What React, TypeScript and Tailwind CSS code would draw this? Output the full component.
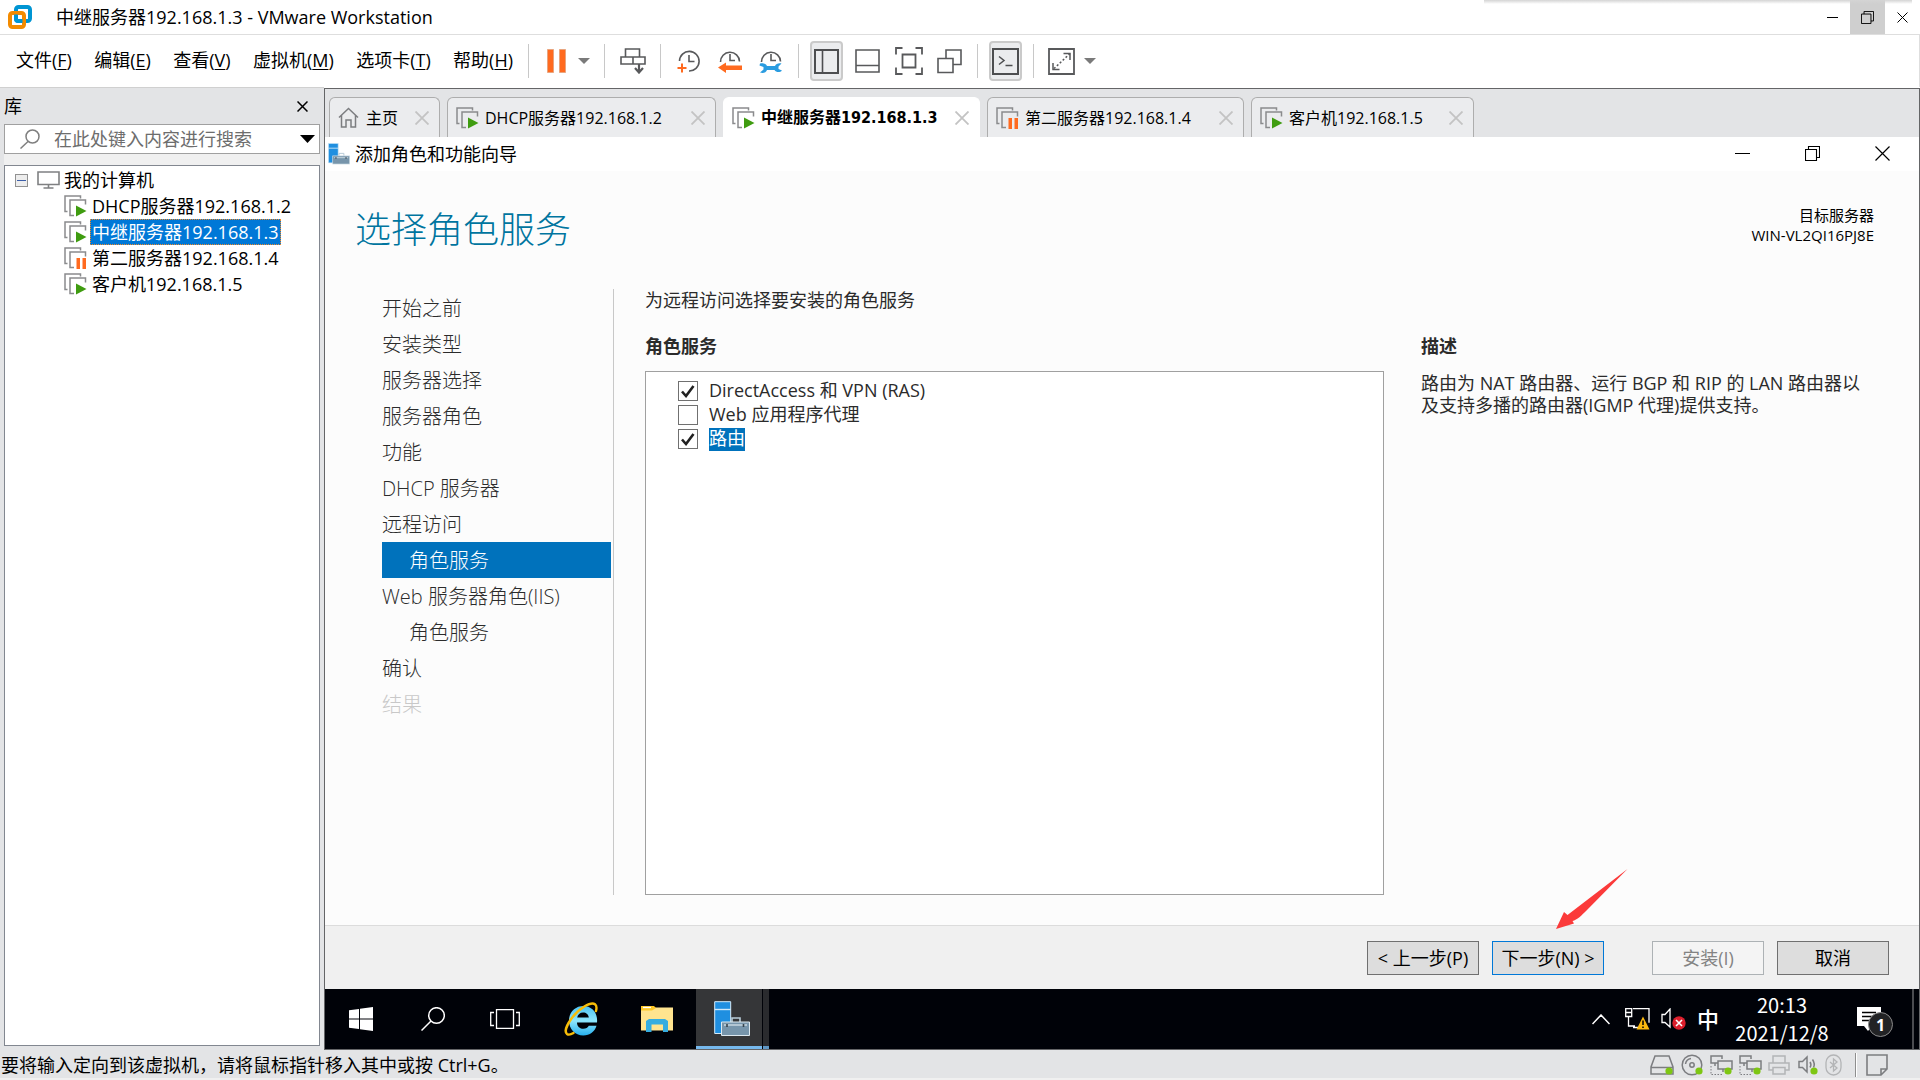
import { useState } from "react";
import type { ReactNode } from "react";

type VmState = "running" | "paused";

const menus = [
  { label: "文件", key: "F" },
  { label: "编辑", key: "E" },
  { label: "查看", key: "V" },
  { label: "虚拟机", key: "M" },
  { label: "选项卡", key: "T" },
  { label: "帮助", key: "H" },
];

const machines: { name: string; state: VmState; tabWidth: string }[] = [
  { name: "DHCP服务器192.168.1.2", state: "running", tabWidth: "w-[269px]" },
  { name: "中继服务器192.168.1.3", state: "running", tabWidth: "w-[257px]" },
  { name: "第二服务器192.168.1.4", state: "paused", tabWidth: "w-[257px]" },
  { name: "客户机192.168.1.5", state: "running", tabWidth: "w-[223px]" },
];

const steps = [
  { label: "开始之前" },
  { label: "安装类型" },
  { label: "服务器选择" },
  { label: "服务器角色" },
  { label: "功能" },
  { label: "DHCP 服务器" },
  { label: "远程访问" },
  { label: "角色服务", sub: true, active: true },
  { label: "Web 服务器角色(IIS)" },
  { label: "角色服务", sub: true },
  { label: "确认" },
  { label: "结果", disabled: true },
];

const roleServices = [
  { id: "ras", label: "DirectAccess 和 VPN (RAS)", checked: true },
  { id: "proxy", label: "Web 应用程序代理", checked: false },
  { id: "routing", label: "路由", checked: true },
];

/* ---------- icons ---------- */

function VmwareLogo() {
  return (
    <svg width="24" height="24" viewBox="0 0 24 24" fill="none" strokeWidth="4">
      <rect x="8" y="2" width="14" height="14" rx="2.5" stroke="#0095d3" />
      <rect x="2" y="8" width="14" height="14" rx="2.5" stroke="#f38b00" />
      <path d="M8 9.500V14a2 2 0 0 0 2 2h4.500" stroke="#0095d3" />
    </svg>
  );
}

function VmIcon({ state }: { state: VmState }) {
  return (
    <svg width="23" height="22" viewBox="0 0 23 22" fill="none" className="shrink-0">
      <path d="M3.500 16.500H1V1h15.500V3.500" stroke="#8a8b8d" strokeWidth="1.500" />
      <path d="M10 20.500H6V5h15.500V9.500" stroke="#8a8b8d" strokeWidth="1.500" />
      {state === "running" ? (
        <path d="M12 10.500 22.500 16 12 21.500z" fill="#3f9c10" />
      ) : (
        <path d="M12.500 11h3.500v11h-3.500zM18.500 11H22v11h-3.500z" fill="#ff6a1f" />
      )}
    </svg>
  );
}

function Cross({ size, color, width = 1 }: { size: number; color: string; width?: number }) {
  return (
    <svg width={size} height={size} viewBox={`0 0 ${size} ${size}`} stroke={color} strokeWidth={width}>
      <path d={`M.5.5 ${size - 0.5} ${size - 0.5}M${size - 0.5}.5.5 ${size - 0.5}`} />
    </svg>
  );
}

function RestoreIcon({ size }: { size: number }) {
  return (
    <svg width={size} height={size} viewBox="0 0 15 15" fill="none" stroke="#000" strokeWidth="1.100">
      <path d="M.5 3.500h11v11H.5zM3.500 3.500V.5h11v11h-3" />
    </svg>
  );
}

function Caret() {
  return (
    <svg width="12" height="6" viewBox="0 0 12 6"><path d="M0 0h12L6 6z" fill="#7a7a7a" /></svg>
  );
}

function Clock({ kind }: { kind: "take" | "revert" | "manage" }) {
  return (
    <svg width="24" height="24" viewBox="0 0 24 24" fill="none">
      {kind === "take" ? (
        <>
          <path d="M2.500 12A9.800 9.800 0 1 1 12 22" stroke="#58595b" strokeWidth="1.600" />
          <path d="M12 6v6.500h5.500" stroke="#58595b" strokeWidth="1.600" />
          <path d="M5 14.500v9M.5 19h9" stroke="#ff6a1f" strokeWidth="2" />
        </>
      ) : (
        <>
          <path d="M2.500 13A9.500 9.500 0 0 1 21.500 12.500" stroke="#58595b" strokeWidth="1.600" />
          <path d="M12 5v6.500h5" stroke="#58595b" strokeWidth="1.600" />
        </>
      )}
      {kind === "revert" && <path d="M0 18.500 8 13.500v3h16v4.500H8v3z" fill="#ff6a1f" />}
      {kind === "manage" && (
        <path
          d="M1 14.500c3.500-.8 6 .3 7 2.500h8c1-2.200 3.500-3.300 6.500-2.500l-3 3v2.500l3.500 1.500c-2 2.300-6 2-7.500-.5H8c-1 2.500-3.500 3.500-7 2.500l3.500-3v-2.500L.5 16.500z"
          fill="#2a9ce0"
        />
      )}
    </svg>
  );
}

function ServerManagerIcon({ size }: { size: number }) {
  return (
    <svg width={size} height={size} viewBox="0 0 36 36" fill="none">
      <path d="M.7.700h16V32.500H.7z" fill="#1f8fe0" stroke="#d3eaf9" strokeWidth="1" />
      <path d="M.7 8.500h16" stroke="#d3eaf9" strokeWidth="1.400" />
      <path d="M18 21v-4h8v4" stroke="#b8ccd8" strokeWidth="1.600" />
      <path d="M7.500 21H35.500V34.500H7.500z" fill="#7795ab" stroke="#dce8ef" strokeWidth="1" />
      <path d="M10 24h23" stroke="#dce8ef" strokeWidth="1.200" />
      <path d="M13 23v3M29.500 23v3" stroke="#38444d" strokeWidth="1.600" />
    </svg>
  );
}

function IeIcon() {
  return (
    <svg width="34" height="34" viewBox="0 0 34 34" fill="none">
      <defs>
        <linearGradient id="ie" x1="0" y1="0" x2="0" y2="1">
          <stop offset="0" stopColor="#4cc4f4" />
          <stop offset=".5" stopColor="#8ee6fd" />
          <stop offset="1" stopColor="#27b0ee" />
        </linearGradient>
      </defs>
      <path
        fillRule="evenodd"
        fill="url(#ie)"
        d="M33 20.500H13c0 4 3 6.300 6.300 6.300 2.700 0 4.500-1.200 5.500-3h7.700C31 29.500 25.800 33.500 19.300 33.500 11 33.500 5 27 5 18.500S11.500 4 19.300 4C28 4 34 11 33 20.500zM13.200 15.500h11.600c-.3-3-2.600-5-5.700-5s-5.400 2-5.900 5z"
      />
      <path
        d="M32 9c.8-3 .6-5.500-1-6.800C26.500-.5 15 6.500 7.500 16.500 2 24 .5 30 3 32c1.600 1.200 4 .5 6.500-1"
        stroke="#f7bd08"
        strokeWidth="2.400"
        strokeLinecap="round"
      />
    </svg>
  );
}

function FolderIcon() {
  return (
    <svg width="32" height="28" viewBox="0 0 32 28">
      <path d="M0 1h12l3 3h-3v3H0z" fill="#ffc928" />
      <path d="M0 4.500h11l3.500-2H32v23H0z" fill="#ffe48f" />
      <path d="M0 1h13l2 2-4 2.500H0z" fill="#ffc928" />
      <path d="M2 2.500h8" stroke="#fff" strokeWidth="1.300" />
      <path d="M5 27V16l3-2h16l3 2v11h-5v-7.500H10.500V27z" fill="#35ade0" />
    </svg>
  );
}

function StatusDot() {
  return <circle cx="18" cy="17" r="3.600" fill="#7ec613" />;
}

function NetworkStatus() {
  return (
    <svg width="23" height="22" viewBox="0 0 23 22" fill="none" stroke="#7c7d80" strokeWidth="1.500">
      <path d="M8 9H1V2h11v3M5 12v-3M8 7h14v8H8zM13 15v3" />
      <path d="M1 12v8.500h12" strokeDasharray="1.500 1.500" strokeWidth="1" />
      <g stroke="none"><StatusDot /></g>
    </svg>
  );
}

/* ---------- shell ---------- */

function ToolGroup({ children, className }: { children: ReactNode; className: string }) {
  return <div className={`flex h-full items-center border-l border-[#c8c8c8] ${className}`}>{children}</div>;
}

function ToolButton({ label, pressed, children }: { label: string; pressed?: boolean; children: ReactNode }) {
  return (
    <button
      aria-label={label}
      className={`flex h-10 w-[33px] items-center justify-center ${
        pressed ? "rounded border-2 border-[#cacaca] bg-[#ebecee]" : ""
      }`}
    >
      {children}
    </button>
  );
}

function TitleBar() {
  return (
    <header className="relative flex h-[35px] items-stretch border-b border-[#dedede] bg-white pl-2">
      <div className="flex flex-1 items-center gap-6">
        <VmwareLogo />
        <h1 className="text-lg leading-6">中继服务器192.168.1.3 - VMware Workstation</h1>
      </div>
      <button aria-label="最小化" className="flex w-[35px] items-center justify-center">
        <span className="h-px w-[11px] bg-black" />
      </button>
      <button aria-label="还原" className="flex w-[35px] items-center justify-center bg-[#cfcfcf]">
        <RestoreIcon size={13} />
      </button>
      <button aria-label="关闭" className="flex w-[35px] items-center justify-center">
        <Cross size={11} color="#000" />
      </button>
      <div className="absolute right-2 top-0 h-1 w-[428px] bg-linear-to-b from-[#d4d4d4] to-transparent" />
    </header>
  );
}

function MenuBar() {
  return (
    <div className="flex h-[52px] items-center border-r border-[#dedede] bg-white">
      <nav className="flex w-[528px] shrink-0 justify-between pb-0.5 pl-4 pr-[15px] text-lg leading-6">
        {menus.map(m => (
          <button key={m.key} className="whitespace-nowrap">
            {m.label}(<u className="underline-offset-2">{m.key}</u>)
          </button>
        ))}
      </nav>
      <div className="flex h-[34px] shrink-0">
        <ToolGroup className="w-[76px] gap-3 pl-[18px]">
          <button aria-label="挂起">
            <svg width="19" height="24" viewBox="0 0 19 24">
              <path d="M.5.5h6v23h-6zM12.500.5h6v23h-6z" fill="#ff6a1f" stroke="#e8a57f" />
            </svg>
          </button>
          <button aria-label="电源选项"><Caret /></button>
        </ToolGroup>
        <ToolGroup className="w-14 justify-center">
          <button aria-label="发送 Ctrl+Alt+Del">
            <svg width="26" height="26" viewBox="0 0 26 26" fill="none" stroke="#58595b" strokeWidth="1.600">
              <path d="M5.500 1h14v8h-14zM1 9h12v7H1zM13 9h12v7H13z" />
              <path d="M19 16v8M15 20l4 4.500 4-4.500" strokeWidth="2.200" />
            </svg>
          </button>
        </ToolGroup>
        <ToolGroup className="w-[138px] gap-[17px] pl-4">
          <button aria-label="拍摄快照"><Clock kind="take" /></button>
          <button aria-label="恢复快照"><Clock kind="revert" /></button>
          <button aria-label="管理快照"><Clock kind="manage" /></button>
        </ToolGroup>
        <ToolGroup className="w-[179px] gap-2 pl-[11px]">
          <ToolButton label="显示库" pressed>
            <svg width="25" height="25" viewBox="0 0 25 25" fill="none" stroke="#4d4e50" strokeWidth="2">
              <path d="M1 1h23v23H1z" /><path d="M8.500 1v23" strokeWidth="1.600" />
            </svg>
          </ToolButton>
          <ToolButton label="缩略图栏">
            <svg width="25" height="24" viewBox="0 0 25 24" fill="none" stroke="#58595b" strokeWidth="1.600">
              <path d="M1 1h23v22H1zM1 16.500h23" />
            </svg>
          </ToolButton>
          <ToolButton label="全屏">
            <svg width="28" height="28" viewBox="0 0 28 28" fill="none" stroke="#58595b" strokeWidth="1.800">
              <path d="M7.500 7.500h13v13h-13zM1 7.500V1h6.500M20.500 1H27v6.500M27 20.500V27h-6.500M7.500 27H1v-6.500" />
            </svg>
          </ToolButton>
          <ToolButton label="Unity">
            <svg width="25" height="25" viewBox="0 0 25 25" fill="none" stroke="#58595b" strokeWidth="1.600">
              <path d="M1 9.500h15v14H1zM9 9.500V1h15v14.500h-8" />
            </svg>
          </ToolButton>
        </ToolGroup>
        <ToolGroup className="w-14 justify-center">
          <ToolButton label="控制台视图" pressed>
            <svg width="27" height="27" viewBox="0 0 27 27" fill="none" stroke="#4d4e50" strokeWidth="2" className="shrink-0">
              <path d="M1 1h25v25H1z" />
              <path d="m7 8.500 5 4-5 4M13.500 17.500h7" strokeWidth="1.500" />
            </svg>
          </ToolButton>
        </ToolGroup>
        <ToolGroup className="gap-[9px] pl-3.5">
          <button aria-label="自由拉伸">
            <svg width="27" height="27" viewBox="0 0 27 27" fill="none" stroke="#58595b" strokeWidth="1.800">
              <path d="M1 1h25v25H1z" />
              <path d="M15.500 5.500H22V12M5 15v6.500h6.500" strokeWidth="1.500" />
              <path d="M22 5.500 5 21.500" strokeWidth="1.500" strokeDasharray="2 2" />
            </svg>
          </button>
          <button aria-label="拉伸选项"><Caret /></button>
        </ToolGroup>
      </div>
    </div>
  );
}

function Library() {
  return (
    <aside className="flex w-[324px] shrink-0 flex-col border-t border-[#d0d0d0] bg-[#e3e4e6] pb-1 pl-1 pr-1 text-lg leading-6">
      <div className="flex h-9 items-center justify-between pr-3">
        <h2>库</h2>
        <button aria-label="关闭库"><Cross size={11} color="#000" width={1.5} /></button>
      </div>
      <div className="flex h-[30px] items-center border border-[#a0a0a0] bg-white pl-[15px] pr-1">
        <svg width="20" height="20" viewBox="0 0 20 20" fill="none" stroke="#7f7f7f" strokeWidth="1.500">
          <circle cx="12.500" cy="7.500" r="6.500" /><path d="M8 12.500.5 19.500" />
        </svg>
        <input
          type="text"
          aria-label="搜索"
          placeholder="在此处键入内容进行搜索"
          className="ml-3.5 h-6 min-w-0 flex-1 bg-transparent outline-none placeholder:text-[#6d6d6d]"
        />
        <button aria-label="搜索范围">
          <svg width="15" height="8" viewBox="0 0 15 8"><path d="M0 0h15L7.500 8z" /></svg>
        </button>
      </div>
      <div className="h-[11px] bg-[#f0f0f0]" />
      <div className="flex-1 border border-[#828790] bg-white pl-2.5 pt-px">
        <div className="flex h-[26px] items-center">
          <button aria-label="折叠" className="flex size-[13px] items-center justify-center border border-[#919191] bg-[#ededed]">
            <span className="h-px w-[9px] bg-[#3c5ea8]" />
          </button>
          <svg width="23" height="18" viewBox="0 0 23 18" fill="none" stroke="#7f8082" strokeWidth="1.600" className="ml-[9px]">
            <path d="M1 1h21v12.500H1zM11.500 13.500V17M6.500 17h10" />
          </svg>
          <span className="ml-1">我的计算机</span>
        </div>
        <ul className="pl-[49px]">
          {machines.map((m, i) => (
            <li key={m.name} className="flex h-[26px] items-center gap-[3px]">
              <VmIcon state={m.state} />
              <button
                className={`flex h-[26px] items-center whitespace-nowrap border px-px ${
                  i === 1 ? "border-dotted border-[#f08a28] bg-[#0078d7] text-white" : "border-transparent"
                }`}
              >
                {m.name}
              </button>
            </li>
          ))}
        </ul>
      </div>
    </aside>
  );
}

function TabStrip() {
  const base = "flex h-10 items-center justify-between rounded-t-md border border-b-0 pl-2 pr-2.5";
  return (
    <div className="flex h-12 items-end gap-[7px] bg-[#e3e4e6] pl-1 text-base leading-5">
      <div className={`${base} w-[111px] border-[#adadad] bg-[#ebecee]`}>
        <button className="flex items-center gap-[7px]">
          <svg width="21" height="21" viewBox="0 0 21 21" fill="none" stroke="#7c7d80" strokeWidth="1.500">
            <path d="M1 10.500 10.500 1.500l9.500 9M3.500 8.500V20h4.500v-7h5v7h4.500V8.500" />
          </svg>
          主页
        </button>
        <button aria-label="关闭主页"><Cross size={14} color="#c3c3c3" width={1.8} /></button>
      </div>
      {machines.map((m, i) => (
        <div
          key={m.name}
          className={`${base} ${m.tabWidth} ${i === 1 ? "border-white bg-white" : "border-[#adadad] bg-[#ebecee]"}`}
        >
          <button
            className={`flex items-center gap-1.5 whitespace-nowrap ${
              i === 1 ? "font-['DejaVu_Sans_Condensed','Noto_Sans_CJK_SC',sans-serif] font-bold" : ""
            }`}
          >
            <VmIcon state={m.state} />
            {m.name}
          </button>
          <button aria-label={`关闭 ${m.name}`}><Cross size={14} color="#c3c3c3" width={1.8} /></button>
        </div>
      ))}
    </div>
  );
}

/* ---------- guest desktop ---------- */

function RoleList() {
  const [selected, setSelected] = useState("routing");
  return (
    <div className="flex-1 border border-[#a0a0a0] bg-white pl-8 pt-[7px]">
      {roleServices.map(r => (
        <div key={r.id} className="flex h-6 items-center">
          <div className="relative h-5">
            <input
              id={r.id}
              type="checkbox"
              defaultChecked={r.checked}
              className="peer block size-5 appearance-none border border-[#707070] bg-white"
            />
            <svg
              width="14" height="13" viewBox="0 0 14 13" fill="none" stroke="#212121" strokeWidth="2.600"
              className="pointer-events-none absolute left-[3px] top-1 hidden peer-checked:block"
            >
              <path d="M1 6.500 5 11 12.500 1" />
            </svg>
          </div>
          <label
            htmlFor={r.id}
            onClick={() => setSelected(r.id)}
            className={`ml-[11px] h-[23px] leading-[21px] ${selected === r.id ? "bg-[#0072bc] text-white" : ""}`}
          >
            {r.label}
          </label>
        </div>
      ))}
    </div>
  );
}

const buttonTone = {
  normal: "border-[#707070] bg-[#dddddd] text-black",
  primary: "border-[#0078d7] bg-[#dddddd] text-black",
  disabled: "border-[#adb2b5] bg-[#f4f4f4] text-[#838383]",
};

function WizardButton({ children, tone = "normal" }: { children: ReactNode; tone?: keyof typeof buttonTone }) {
  return (
    <button
      disabled={tone === "disabled"}
      className={`h-[34px] w-28 whitespace-nowrap border text-lg leading-6 ${buttonTone[tone]}`}
    >
      {children}
    </button>
  );
}

function Wizard() {
  return (
    <section className="flex flex-1 flex-col bg-[#fcfcfc] text-lg leading-6 text-[#2b2b2b]">
      <div className="flex h-[34px] items-center bg-white pl-[3px] text-black">
        <ServerManagerIcon size={22} />
        <h2 className="ml-[5px] flex-1">添加角色和功能向导</h2>
        <div className="flex items-center gap-[55px] pb-0.5 pr-[29px]">
          <button aria-label="最小化" className="flex h-[15px] items-center"><span className="h-px w-[15px] bg-black" /></button>
          <button aria-label="还原"><RestoreIcon size={15} /></button>
          <button aria-label="关闭"><Cross size={15} color="#000" width={1.2} /></button>
        </div>
      </div>

      <div className="flex h-[118px] items-start justify-between pl-[30px] pr-[45px] pt-[34px]">
        <h1 className="text-4xl font-light leading-[50px] text-[#00759f]">选择角色服务</h1>
        <p className="text-right text-[15px] leading-5 text-black">
          目标服务器
          <br />
          WIN-VL2QI16PJ8E
        </p>
      </div>

      <div className="flex flex-1 pb-[30px] pl-[57px] pr-[45px]">
        <nav className="w-[232px] shrink-0 border-r border-[#c8c8c8] pr-[2px] pt-px text-xl font-light">
          {steps.map((s, i) => (
            <button
              key={i}
              disabled={s.disabled}
              className={`flex h-9 w-full items-center whitespace-nowrap pt-px disabled:text-[#c8c8c8] ${s.sub ? "pl-[27px]" : ""} ${
                s.active ? "bg-[#0072bc] text-white" : ""
              }`}
            >
              {s.label}
            </button>
          ))}
        </nav>
        <div className="ml-[31px] flex flex-1 flex-col">
          <p className="leading-[22px]">为远程访问选择要安装的角色服务</p>
          <h3 className="mb-[14px] mt-6 leading-[22px] font-bold">角色服务</h3>
          <RoleList />
        </div>
        <div className="ml-[37px] w-[453px] shrink-0 pt-[46px]">
          <h3 className="leading-[22px] font-bold">描述</h3>
          <p className="mt-[15px] leading-[22px]">
            路由为 NAT 路由器、运行 BGP 和 RIP 的 LAN 路由器以及支持多播的路由器(IGMP 代理)提供支持。
          </p>
        </div>
      </div>

      <footer className="flex h-16 items-center justify-end gap-[13px] border-t border-[#dcdcdc] bg-[#f0f0f0] pr-[30px]">
        <WizardButton>&lt; 上一步(P)</WizardButton>
        <div className="relative mr-[35px]">
          <WizardButton tone="primary">下一步(N) &gt;</WizardButton>
          <svg width="72" height="60" viewBox="0 0 72 60" className="absolute bottom-full left-16 mb-3">
            <path d="M71.500 0 11.500 46 8 43 0 60l18-5.500-1.500-2.500C21 51 26 46 30 42z" fill="#fb3a3a" />
          </svg>
        </div>
        <WizardButton tone="disabled">安装(I)</WizardButton>
        <WizardButton>取消</WizardButton>
      </footer>
    </section>
  );
}

function Taskbar() {
  return (
    <div className="flex h-[60px] items-center bg-[#000208] text-white">
      <button aria-label="开始" className="flex w-[72px] justify-center">
        <svg width="24" height="24" viewBox="0 0 24 24" fill="#fff">
          <path d="M0 3.300 10 2v9.500H0zM11 1.800 24 0v11.500H11zM0 12.500h10V22L0 20.700zM11 12.500h13V24l-13-1.800z" />
        </svg>
      </button>
      <button aria-label="搜索" className="flex w-[72px] justify-center">
        <svg width="24" height="24" viewBox="0 0 24 24" fill="none" stroke="#fff" strokeWidth="1.500">
          <circle cx="15.500" cy="8.500" r="7.800" /><path d="M10 14 .5 23.500" />
        </svg>
      </button>
      <button aria-label="任务视图" className="flex w-[72px] justify-center">
        <svg width="30" height="20" viewBox="0 0 30 20" fill="none" stroke="#fff" strokeWidth="1.300">
          <path d="M6.500.7h17v18.600h-17zM4 3.500H.7v13H4M26 3.500h3.300v13H26" />
        </svg>
      </button>
      <button aria-label="Internet Explorer" className="ml-1 flex w-[72px] justify-center"><IeIcon /></button>
      <button aria-label="文件资源管理器" className="ml-1 flex w-[72px] justify-center"><FolderIcon /></button>
      <button
        aria-label="服务器管理器"
        className="ml-[3px] flex h-full w-[66px] items-center justify-end border-b-3 border-[#76b9ed] bg-[#353638] pr-3 pt-0.5"
      >
        <ServerManagerIcon size={36} />
      </button>
      <span className="ml-px h-full w-[6px] border-b-3 border-[#5f97c4] bg-[#2a2b2e]" />

      <div className="ml-auto flex h-full items-center">
        <button aria-label="显示隐藏的图标">
          <svg width="18" height="11" viewBox="0 0 18 11" fill="none" stroke="#fff" strokeWidth="1.500"><path d="M.5 10 9 1l8.500 9" /></svg>
        </button>
        <svg width="25" height="22" viewBox="0 0 25 22" fill="none" stroke="#fff" strokeWidth="1.300" className="ml-[15px]">
          <path d="M8 .7h16v14M3.500 9v9H10M8 19.500h5M.7.700h6V8.500h-6zM.7 4.500h6" />
          <path d="M18 8.500 24.500 21.500h-13z" fill="#fbb80f" stroke="none" />
          <path d="M18 12.500v4.500M18 18.500V20" stroke="#000" strokeWidth="1.500" />
        </svg>
        <svg width="25" height="22" viewBox="0 0 25 22" fill="none" className="ml-[11px]">
          <path d="M1 6.500h3L9 1v18L4 14.500H1z" stroke="#fff" strokeWidth="1.300" />
          <circle cx="18" cy="15" r="6.700" fill="#dc1e2c" />
          <path d="m15 12 6 6M21 12l-6 6" stroke="#fff" strokeWidth="1.600" />
        </svg>
        <span className="ml-[11px] w-[22px] text-[22px] font-medium leading-7">中</span>
        <div className="ml-3 w-[102px] text-center font-['Noto_Sans_CJK_SC',sans-serif] text-xl leading-7">
          <div>20:13</div>
          <div>2021/12/8</div>
        </div>
        <button aria-label="通知" className="relative ml-6 mr-[19px] h-9 w-9 text-left">
          <svg width="25" height="25" viewBox="0 0 25 25">
            <path d="M0 0h24v19h-9l-4 5-4-5H0z" fill="#fff" />
            <path d="M5 5.500h14M5 9.500h14M5 13.500h9" stroke="#000" strokeWidth="1.400" />
          </svg>
          <span className="absolute bottom-0 right-0 flex size-[25px] items-center justify-center rounded-full border border-[#8a8a8a] bg-[#222325] text-base font-bold leading-5">
            1
          </span>
        </button>
        <span className="h-full w-[7px] border-l-2 border-[#4b4c50]" />
      </div>
    </div>
  );
}

function StatusBar() {
  return (
    <footer className="flex h-[30px] items-center border-b-2 border-[#f0f0f0] bg-[#e3e4e6] pl-px pr-8 pt-0.5">
      <p className="flex-1 text-lg leading-6">要将输入定向到该虚拟机，请将鼠标指针移入其中或按 Ctrl+G。</p>
      <div className="flex items-center gap-1.5">
        <svg width="25" height="22" viewBox="0 0 25 22" fill="none" stroke="#7c7d80" strokeWidth="1.500">
          <path d="M5 2h14l4 11v7H1v-7zM1 13.500h22" />
          <circle cx="19" cy="17" r="3.600" fill="#7ec613" stroke="none" />
        </svg>
        <svg width="23" height="22" viewBox="0 0 23 22" fill="none" stroke="#7c7d80" strokeWidth="1.500">
          <circle cx="11" cy="11" r="9.800" /><circle cx="11" cy="11" r="2.200" /><path d="M4.500 10A6.500 6.500 0 0 1 10 4.500" />
          <g stroke="none"><StatusDot /></g>
        </svg>
        <NetworkStatus />
        <NetworkStatus />
        <svg width="22" height="22" viewBox="0 0 22 22" fill="none" stroke="#b3b4b6" strokeWidth="1.500">
          <path d="M5 9V2h12v7M5 16H1V9h20v7h-4M5 13.500h12V20H5z" />
        </svg>
        <svg width="23" height="22" viewBox="0 0 23 22" fill="none" stroke="#7c7d80" strokeWidth="1.500">
          <path d="M3 7.500h3.500L11 3v15l-4.500-4.500H3zM14 8c1 1.500 1 4 0 5.500M16.500 5.500c2 3 2 6 1 8" />
          <g stroke="none"><StatusDot /></g>
        </svg>
        <svg width="18" height="22" viewBox="0 0 18 22" fill="none" stroke="#b3b4b6" strokeWidth="1.300">
          <rect x="1" y="1" width="15" height="20" rx="7.500" />
          <path d="m5 8 7 6-3.500 3V5l3.500 3-7 6" />
        </svg>
        <span className="ml-1.5 h-6 w-0.5 border-l border-[#8e8e8e] bg-white" />
        <svg width="22" height="22" viewBox="0 0 22 22" fill="none" stroke="#7c7d80" strokeWidth="1.600" className="ml-[3px]">
          <path d="M1 1h20v14l-6 6H1zM15 21v-6h6" />
        </svg>
      </div>
    </footer>
  );
}

export default function App() {
  return (
    <div className="flex min-h-screen flex-col bg-white font-['Open_Sans','Noto_Sans_CJK_SC',sans-serif] text-black">
      <TitleBar />
      <MenuBar />
      <div className="flex flex-1">
        <Library />
        <main className="mt-px flex min-w-0 flex-1 flex-col border border-[#646567]">
          <TabStrip />
          <Wizard />
          <Taskbar />
        </main>
      </div>
      <StatusBar />
    </div>
  );
}
